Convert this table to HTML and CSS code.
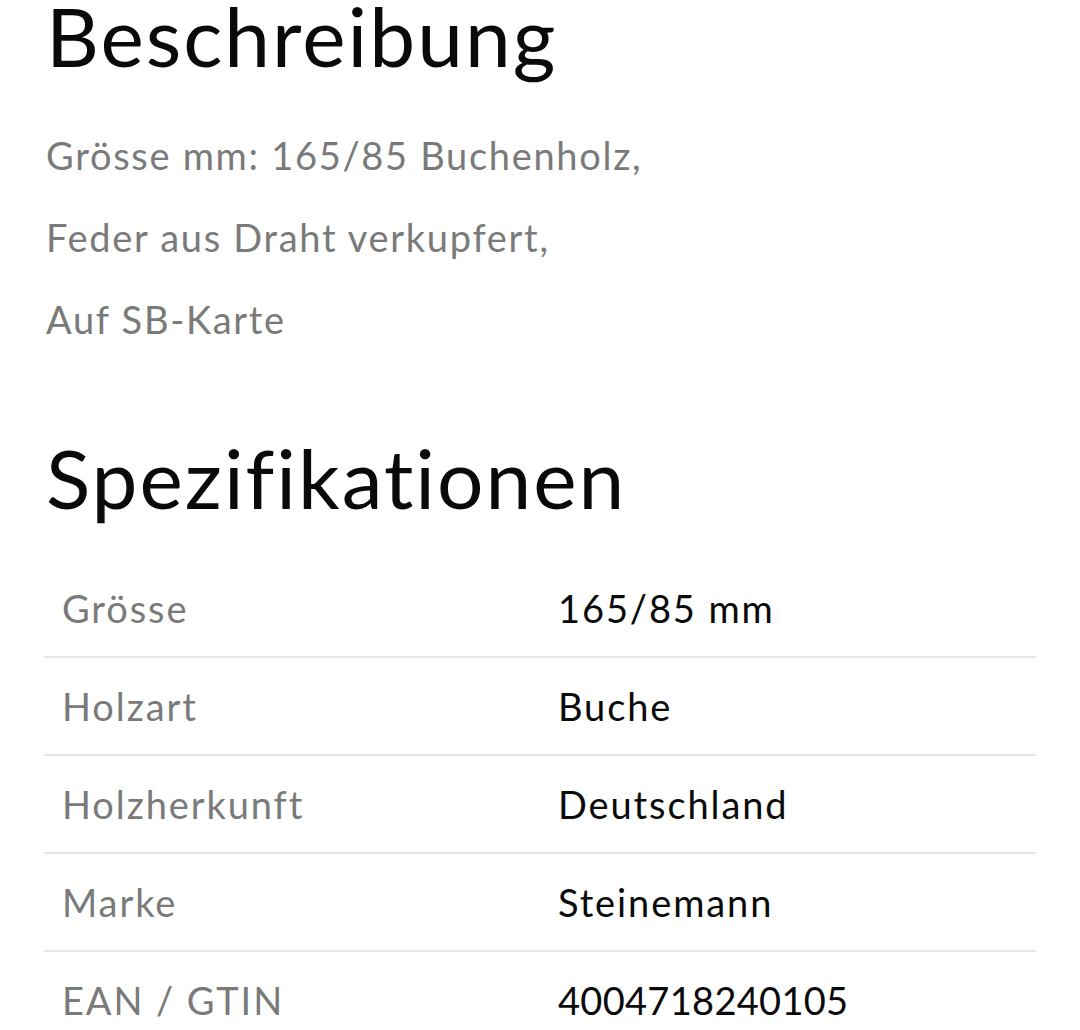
FILE: index.html
```html
<!DOCTYPE html>
<html lang="de">
<head>
<meta charset="utf-8">
<link rel="stylesheet" href="styles.css">
</head>
<body>
<main class="page">
  <section class="desc">
    <h1 class="title">Beschreibung</h1>
    <p class="line">Grösse mm: 165/85 Buchenholz,</p>
    <p class="line">Feder aus Draht verkupfert,</p>
    <p class="line">Auf SB-Karte</p>
  </section>
  <section class="specs">
    <h2 class="title">Spezifikationen</h2>
    <table class="spec-table">
      <tr><td class="label">Grösse</td><td class="value">165/85 mm</td></tr>
      <tr><td class="label">Holzart</td><td class="value">Buche</td></tr>
      <tr><td class="label">Holzherkunft</td><td class="value">Deutschland</td></tr>
      <tr><td class="label">Marke</td><td class="value">Steinemann</td></tr>
      <tr><td class="label">EAN / GTIN</td><td class="value num">4004718240105</td></tr>
    </table>
  </section>
</main>
</body>
</html>
```
FILE: styles.css
```css
html, body {
  margin: 0;
  padding: 0;
  background: #ffffff;
}
body {
  font-family: "Lato", "Noto Sans", sans-serif;
  color: #000;
}
.page {
  padding: 0 44px 0 44px;
}
.title {
  margin: 0;
  font-weight: 400;
  font-size: 82px;
  line-height: 70px;
  letter-spacing: 2px;
  padding-left: 2px;
  color: #0a0a0a;
}
.line {
  margin: 0;
  padding-left: 2px;
  font-size: 38px;
  line-height: 82px;
  letter-spacing: 1.7px;
  color: #7a7a7a;
}
.desc .line:first-of-type {
  margin-top: 44px;
}
.specs {
  margin-top: 82px;
}
.specs .title {
  margin-bottom: 48px;
}
.spec-table {
  width: 100%;
  border-collapse: collapse;
  table-layout: fixed;
}
.spec-table td {
  padding: 0 18px;
  height: 96px;
  font-size: 38px;
  letter-spacing: 1.9px;
  vertical-align: middle;
  border-bottom: 2px solid #e6e6e6;
}
.spec-table tr:last-child td {
  border-bottom: none;
}
.label {
  color: #7a7a7a;
}
.value {
  color: #0a0a0a;
}
.value.num {
  letter-spacing: 0.3px;
}
```
